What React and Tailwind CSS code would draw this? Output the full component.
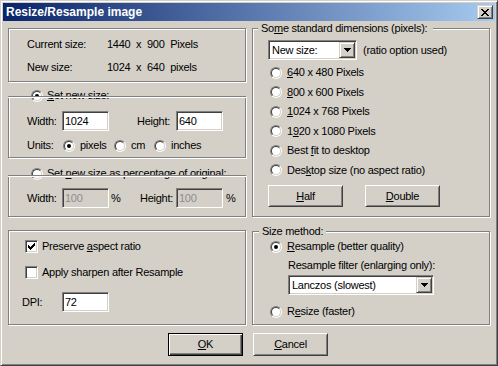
import React from "react";

const sunken =
  "border border-t-[#808080] border-l-[#808080] border-b-white border-r-white shadow-[inset_1px_1px_0_#404040,inset_-1px_-1px_0_#d4d0c8]";
const raised =
  "border border-t-white border-l-white border-b-[#404040] border-r-[#404040] shadow-[inset_1px_1px_0_#d4d0c8,inset_-1px_-1px_0_#808080]";
const smallRaised =
  "border border-t-[#d4d0c8] border-l-[#d4d0c8] border-b-[#404040] border-r-[#404040] shadow-[inset_1px_1px_0_#fff,inset_-1px_-1px_0_#808080] bg-[#d4d0c8]";

const Radio = ({ checked }) => (
  <span className="relative inline-block h-[12px] w-[12px] shrink-0 rounded-full border border-t-[#808080] border-l-[#808080] border-b-white border-r-white">
    <span className="absolute inset-0 rounded-full border border-t-[#404040] border-l-[#404040] border-b-[#d4d0c8] border-r-[#d4d0c8] bg-white" />
    {checked && <span className="absolute left-[3px] top-[3px] h-[4px] w-[4px] rounded-full bg-black" />}
  </span>
);

const Check = ({ checked }) => (
  <span className={`relative inline-block h-[13px] w-[13px] shrink-0 bg-white ${sunken}`}>
    {checked && (
      <svg className="absolute left-[2px] top-[2px]" width="7" height="7" shapeRendering="crispEdges">
        {[[0, 2], [1, 3], [2, 4], [3, 3], [4, 2], [5, 1], [6, 0]].map(([x, y]) => (
          <rect key={x} x={x} y={y} width="1" height="3" fill="#000" />
        ))}
      </svg>
    )}
  </span>
);

const Field = ({ className, disabled, children }) => (
  <div
    className={`flex items-center pl-[2px] ${sunken} ${disabled ? "bg-[#d4d0c8] text-[#8c8c8c]" : "bg-white"} ${className}`}
  >
    {children}
  </div>
);

const Arrow = () => (
  <svg width="7" height="4" className="block" shapeRendering="crispEdges">
    <path d="M0 0h7v1h-1v1h-1v1h-1v1h-1v-1h-1v-1h-1v-1h-1z" fill="#000" />
  </svg>
);

const Combo = ({ className, children }) => (
  <div className={`flex items-center bg-white p-[1px] ${sunken} ${className}`}>
    <span className="flex-1 whitespace-nowrap pl-[2px]">{children}</span>
    <span className={`flex h-[16px] w-[16px] items-center justify-center ${smallRaised}`}>
      <Arrow />
    </span>
  </div>
);

const Button = ({ className, isDefault, children }) => (
  <div
    className={`flex items-center justify-center bg-[#d4d0c8] ${
      isDefault
        ? "border border-black shadow-[inset_1px_1px_0_#fff,inset_-1px_-1px_0_#404040,inset_-2px_-2px_0_#808080]"
        : raised
    } ${className}`}
  >
    {children}
  </div>
);

const Box = ({ className, children }) => (
  <div className={`relative border border-[#808080] shadow-[inset_1px_1px_0_#fff,1px_1px_0_#fff] ${className}`}>
    {children}
  </div>
);

const Legend = ({ className, children }) => (
  <span className={`absolute bg-[#d4d0c8] px-[3px] whitespace-nowrap ${className}`}>{children}</span>
);

// radio label that the group line is painted across, as in the original dialog
const CrossedLegend = ({ top, checked, children }) => (
  <>
    <div className={`absolute left-[22px] flex h-[13px] items-center gap-[4px] whitespace-nowrap ${top}`}>
      <Radio checked={checked} />
      <span>{children}</span>
    </div>
    <div className="absolute left-[-1px] right-[-1px] top-[-1px] h-[1px] bg-[#808080] shadow-[0_1px_0_#fff]" />
  </>
);

const CloseGlyph = () => (
  <svg width="8" height="7" className="block" shapeRendering="crispEdges">
    {[
      [0, 0, 2], [6, 0, 2],
      [1, 1, 2], [5, 1, 2],
      [2, 2, 4],
      [3, 3, 2],
      [2, 4, 4],
      [1, 5, 2], [5, 5, 2],
      [0, 6, 2], [6, 6, 2],
    ].map(([x, y, w], i) => (
      <rect key={i} x={x} y={y} width={w} height="1" fill="#000" />
    ))}
  </svg>
);

const dims = [
  [<><u>6</u>40 x 480 Pixels</>],
  [<><u>8</u>00 x 600 Pixels</>],
  [<><u>1</u>024 x 768 Pixels</>],
  [<>1<u>9</u>20 x 1080 Pixels</>],
  [<>Best <u>f</u>it to desktop</>],
  [<>Des<u>k</u>top size (no aspect ratio)</>],
];

export default function App() {
  return (
    <div className="h-[366px] w-[498px] overflow-hidden border border-t-[#d4d0c8] border-l-[#d4d0c8] border-b-[#404040] border-r-[#404040] bg-[#d4d0c8] p-[2px] font-['Liberation_Sans',Arial,sans-serif] text-[11px] leading-[13px] tracking-[-0.25px] text-black shadow-[inset_1px_1px_0_#fff,inset_-1px_-1px_0_#808080]">
      {/* title bar */}
      <div className="flex h-[18px] items-center bg-[linear-gradient(to_right,#0a246a,#a6caf0)] pl-[3px]">
        <span className="text-[12px] font-bold tracking-[0px] text-white">Resize/Resample image</span>
        <span className={`ml-auto mr-[2px] flex h-[14px] w-[16px] items-center justify-center ${smallRaised}`}>
          <CloseGlyph />
        </span>
      </div>

      <div className="grid grid-cols-[238px_238px] gap-x-[6px] pl-[5px] pt-[7px]">
        {/* left column */}
        <div className="flex flex-col">
          <Box className="flex h-[54px] flex-col gap-[10px] pl-[18px] pt-[9px]">
            <div className="flex">
              <span className="w-[80px]">Current size:</span>
              <span className="whitespace-pre">1440  x  900  Pixels</span>
            </div>
            <div className="flex">
              <span className="w-[80px]">New size:</span>
              <span className="whitespace-pre">1024  x  640  pixels</span>
            </div>
          </Box>

          <Box className="mt-[14px] h-[62px] pt-[14px]">
            <div className="flex items-center pl-[18px]">
              <span className="w-[35px]">Width:</span>
              <Field className="h-[20px] w-[47px]">1024</Field>
              <span className="ml-[28px] w-[39px]">Height:</span>
              <Field className="h-[20px] w-[47px]">640</Field>
            </div>
            <div className="mt-[8px] flex h-[13px] items-center pl-[18px]">
              <span className="w-[36px]">Units:</span>
              <span className="flex w-[51px] items-center gap-[5px]">
                <Radio checked />
                pixels
              </span>
              <span className="flex w-[40px] items-center gap-[5px]">
                <Radio />
                cm
              </span>
              <span className="flex items-center gap-[5px]">
                <Radio />
                inches
              </span>
            </div>
            <CrossedLegend top="top-[-8px]" checked>
              <u>S</u>et new size:
            </CrossedLegend>
          </Box>

          <Box className="mt-[17px] h-[42px] pt-[12px]">
            <div className="flex items-center pl-[18px]">
              <span className="w-[35px]">Width:</span>
              <Field disabled className="h-[20px] w-[47px]">100</Field>
              <span className="w-[31px] pl-[2px]">%</span>
              <span className="w-[36px]">Height:</span>
              <Field disabled className="h-[20px] w-[47px]">100</Field>
              <span className="pl-[3px]">%</span>
            </div>
            <CrossedLegend top="top-[-9px]">
              Set <u>n</u>ew size as percentage of original:
            </CrossedLegend>
          </Box>

          <Box className="mt-[13px] h-[95px] pt-[9px]">
            <div className="flex h-[13px] items-center gap-[4px] pl-[16px]">
              <Check checked />
              <span>
                Preserve <u>a</u>spect ratio
              </span>
            </div>
            <div className="mt-[13px] flex h-[13px] items-center gap-[4px] pl-[16px]">
              <Check />
              <span>Apply sharpen after Resample</span>
            </div>
            <div className="mt-[13px] flex items-center pl-[13px]">
              <span className="w-[40px]">DPI:</span>
              <Field className="h-[20px] w-[47px]">72</Field>
            </div>
          </Box>
        </div>

        {/* right column */}
        <div className="flex flex-col">
          <Box className="h-[189px] pl-[15px] pt-[11px]">
            <Legend className="left-[5px] top-[-7px] pr-[6px]">
              So<u>m</u>e standard dimensions (pixels):
            </Legend>
            <div className="flex items-center">
              <Combo className="h-[20px] w-[89px]">New size:</Combo>
              <span className="ml-[6px]">(ratio option used)</span>
            </div>
            <div className="mt-[3px] flex flex-col">
              {dims.map(([label], i) => (
                <div key={i} className="flex h-[19.5px] items-center gap-[5px] pl-[2px]">
                  <Radio />
                  <span>{label}</span>
                </div>
              ))}
            </div>
            <div className="mt-[5px] flex gap-[22px]">
              <Button className="h-[22px] w-[75px]">
                <span>
                  <u>H</u>alf
                </span>
              </Button>
              <Button className="h-[22px] w-[75px]">
                <span>
                  <u>D</u>ouble
                </span>
              </Button>
            </div>
          </Box>

          <Box className="mt-[14px] h-[94px] pl-[17px] pt-[8px]">
            <Legend className="left-[6px] top-[-7px]">Size method:</Legend>
            <div className="flex h-[13px] items-center gap-[5px]">
              <Radio checked />
              <span>
                <u>R</u>esample (better quality)
              </span>
            </div>
            <div className="mt-[6px] h-[13px] pl-[18px]">Resample filter (enlarging only):</div>
            <Combo className="ml-[18px] mt-[3px] h-[20px] w-[146px]">Lanczos (slowest)</Combo>
            <div className="mt-[10px] flex h-[13px] items-center gap-[5px]">
              <Radio />
              <span>
                R<u>e</u>size (faster)
              </span>
            </div>
          </Box>
        </div>
      </div>

      <div className="mt-[8px] flex justify-center gap-[10px] pr-[2px]">
        <Button isDefault className="h-[23px] w-[75px]">
          <span>
            <u>O</u>K
          </span>
        </Button>
        <Button className="h-[23px] w-[75px]">
          <span>
            <u>C</u>ancel
          </span>
        </Button>
      </div>
    </div>
  );
}
